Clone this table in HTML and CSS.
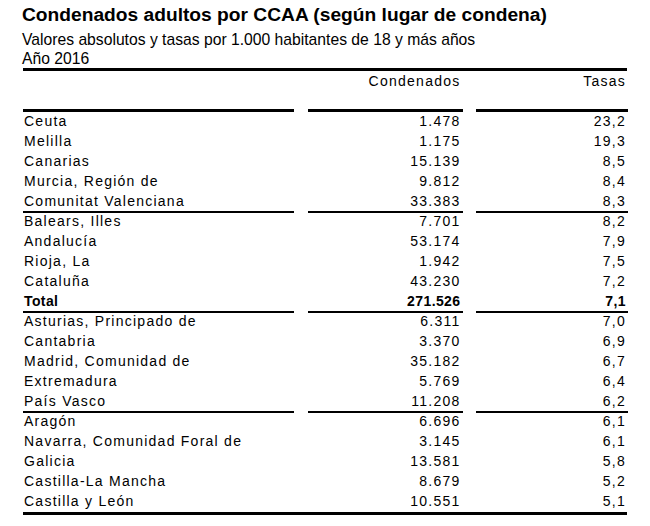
FILE: index.html
```html
<!DOCTYPE html>
<html lang="es">
<head>
<meta charset="utf-8">
<title>Condenados adultos por CCAA</title>
<link rel="stylesheet" href="styles.css">
</head>
<body>
<div class="page">
  <h1 class="title">Condenados adultos por CCAA (según lugar de condena)</h1>
  <p class="subtitle">Valores absolutos y tasas por 1.000 habitantes de 18 y más años</p>
  <p class="subtitle year">Año 2016</p>
  <div class="table">
    <div class="row head">
      <div class="cell name"></div>
      <div class="cell num">Condenados</div>
      <div class="cell num">Tasas</div>
    </div>
    <div class="row"><div class="cell name">Ceuta</div><div class="cell num">1.478</div><div class="cell num">23,2</div></div>
    <div class="row"><div class="cell name">Melilla</div><div class="cell num">1.175</div><div class="cell num">19,3</div></div>
    <div class="row"><div class="cell name">Canarias</div><div class="cell num">15.139</div><div class="cell num">8,5</div></div>
    <div class="row"><div class="cell name">Murcia, Región de</div><div class="cell num">9.812</div><div class="cell num">8,4</div></div>
    <div class="row sep"><div class="cell name">Comunitat Valenciana</div><div class="cell num">33.383</div><div class="cell num">8,3</div></div>
    <div class="row"><div class="cell name">Balears, Illes</div><div class="cell num">7.701</div><div class="cell num">8,2</div></div>
    <div class="row"><div class="cell name">Andalucía</div><div class="cell num">53.174</div><div class="cell num">7,9</div></div>
    <div class="row"><div class="cell name">Rioja, La</div><div class="cell num">1.942</div><div class="cell num">7,5</div></div>
    <div class="row"><div class="cell name">Cataluña</div><div class="cell num">43.230</div><div class="cell num">7,2</div></div>
    <div class="row sep total"><div class="cell name">Total</div><div class="cell num">271.526</div><div class="cell num">7,1</div></div>
    <div class="row"><div class="cell name">Asturias, Principado de</div><div class="cell num">6.311</div><div class="cell num">7,0</div></div>
    <div class="row"><div class="cell name">Cantabria</div><div class="cell num">3.370</div><div class="cell num">6,9</div></div>
    <div class="row"><div class="cell name">Madrid, Comunidad de</div><div class="cell num">35.182</div><div class="cell num">6,7</div></div>
    <div class="row"><div class="cell name">Extremadura</div><div class="cell num">5.769</div><div class="cell num">6,4</div></div>
    <div class="row sep"><div class="cell name">País Vasco</div><div class="cell num">11.208</div><div class="cell num">6,2</div></div>
    <div class="row"><div class="cell name">Aragón</div><div class="cell num">6.696</div><div class="cell num">6,1</div></div>
    <div class="row"><div class="cell name">Navarra, Comunidad Foral de</div><div class="cell num">3.145</div><div class="cell num">6,1</div></div>
    <div class="row"><div class="cell name">Galicia</div><div class="cell num">13.581</div><div class="cell num">5,8</div></div>
    <div class="row"><div class="cell name">Castilla-La Mancha</div><div class="cell num">8.679</div><div class="cell num">5,2</div></div>
    <div class="row last"><div class="cell name">Castilla y León</div><div class="cell num">10.551</div><div class="cell num">5,1</div></div>
  </div>
</div>
</body>
</html>
```
FILE: styles.css
```css
html, body {
  margin: 0;
  padding: 0;
  background: #ffffff;
}
body {
  font-family: "Liberation Sans", Arial, sans-serif;
  color: #000000;
}
.page {
  width: 605px;
  padding: 4px 0 0 22px;
}
.title {
  margin: 0;
  font-size: 19.2px;
  font-weight: bold;
  line-height: 22px;
  height: 26px;
}
.subtitle {
  margin: 0;
  font-size: 15.7px;
  line-height: 20px;
  height: 20px;
}
.subtitle.year {
  height: 18px;
  line-height: 18px;
}
.table {
  border-top: 3px solid #000;
  border-bottom: 3px solid #000;
  margin-left: 1px;
}
.row {
  display: grid;
  grid-template-columns: 271px 155px 152px;
  column-gap: 13.5px;
  height: 20px;
  font-size: 14px;
  letter-spacing: 1.25px;
}
.row.head {
  height: 41px;
}
.row.head .cell,
.row.sep .cell {
  border-bottom: 2px solid #000;
}
.row.head .cell {
  border-bottom-width: 3px;
  line-height: 20px;
}
.cell {
  box-sizing: border-box;
  line-height: 19px;
  white-space: nowrap;
}
.cell.name {
  padding-left: 1px;
}
.cell.num {
  text-align: right;
  padding-right: 2px;
}
.row.total {
  font-weight: bold;
  letter-spacing: 0.4px;
}
```
